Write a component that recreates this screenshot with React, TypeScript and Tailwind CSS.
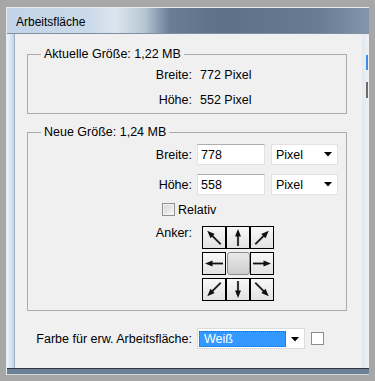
import React from "react";

function Arrow({ angle, length }: { angle: number; length: number }) {
  const tip = 10.5 - length / 2;
  const tail = 10.5 + length / 2;
  return (
    <svg width="22" height="21" viewBox="0 0 22 21">
      <g transform={`rotate(${angle} 11 10.5)`}>
        <line x1="11" y1={tail} x2="11" y2={tip + 5} stroke="#7a7a7a" strokeWidth="2.6" strokeOpacity="0.35" />
        <line x1="11" y1={tail} x2="11" y2={tip + 5} stroke="#111" strokeWidth="1.6" />
        <polygon points={`11,${tip} 8,${tip + 7.5} 14,${tip + 7.5}`} fill="#111" />
      </g>
    </svg>
  );
}

function Cell({ angle, length }: { angle: number; length: number }) {
  return (
    <div className="flex h-[23px] w-[24px] items-center justify-center border border-black bg-[linear-gradient(180deg,#f8f8f8,#e2e2e2)]">
      <Arrow angle={angle} length={length} />
    </div>
  );
}

function Caret() {
  return (
    <svg width="8" height="5" viewBox="0 0 8 5">
      <polygon points="0,0 8,0 4,4.5" fill="#000" />
    </svg>
  );
}

function PixelSelect() {
  return (
    <div className="ml-[6px] flex h-[21px] w-[67px] items-center justify-between border border-[#e2e2e2] bg-white pl-[4px] pr-[5px]">
      <span>Pixel</span>
      <Caret />
    </div>
  );
}

export default function App() {
  return (
    <div className="h-[381px] w-[375px] bg-[#a7a7a7] pb-[6px] pl-[6px] pr-[6px] pt-[7px] font-['Liberation_Sans',Arial,sans-serif] text-[12.5px] leading-[14px] text-black">
      <div className="flex h-full flex-col border-l border-t border-[#e6ebf0] bg-[#dbe5ef]">
        {/* Titelleiste */}
        <div className="flex h-[26px] items-center border-b border-[#7f8ea1] bg-[linear-gradient(90deg,#c3d4e8_0%,#c9d9ea_22%,#dbe5ef_30%,#b7c5d4_38%,#6a7d94_45%,#5d7088_60%,#687b92_86%,#8496ab_100%)] pl-[9px] pt-[2px] text-[12px]">
          Arbeitsfläche
        </div>

        <div className="flex flex-1">
          <div className="w-[8px] border-r border-[#a3b2c2] bg-[linear-gradient(90deg,#eef4fa,#c4d5e8)]" />

          <div className="flex-1 bg-[#f0f0f0]">
            <fieldset className="ml-[12px] mt-[13px] w-[320px] border border-[#ababab] pb-[1px] pt-[1px]">
              <legend className="ml-[13px] px-[3px]">Aktuelle Größe: 1,22 MB</legend>
              <div className="flex h-[25px] items-center">
                <span className="w-[164px] text-right">Breite:</span>
                <span className="ml-[8px]">772 Pixel</span>
              </div>
              <div className="flex h-[25px] items-center">
                <span className="w-[164px] text-right">Höhe:</span>
                <span className="ml-[8px]">552 Pixel</span>
              </div>
            </fieldset>

            <fieldset className="ml-[12px] mt-[11px] w-[320px] border border-[#ababab] pb-[9px] pt-[5px]">
              <legend className="ml-[13px] px-[3px]">Neue Größe: 1,24 MB</legend>
              <div className="flex h-[21px] items-center">
                <span className="w-[164px] text-right">Breite:</span>
                <div className="ml-[5px] flex h-[21px] w-[68px] items-center border border-[#dfe3e8] border-t-[#abadb3] bg-white pl-[3px]">
                  778
                </div>
                <PixelSelect />
              </div>
              <div className="mt-[9px] flex h-[21px] items-center">
                <span className="w-[164px] text-right">Höhe:</span>
                <div className="ml-[5px] flex h-[21px] w-[68px] items-center border border-[#dfe3e8] border-t-[#abadb3] bg-white pl-[3px]">
                  558
                </div>
                <PixelSelect />
              </div>
              <div className="mt-[8px] flex h-[13px] items-center pl-[134px]">
                <div className="h-[13px] w-[13px] border border-[#8e8f8f] bg-[linear-gradient(135deg,#d6d6d6,#f7f7f7)] shadow-[inset_0_0_0_1px_#f3f3f3]" />
                <span className="ml-[3px]">Relativ</span>
              </div>
              <div className="mt-[10px] flex">
                <span className="w-[164px] text-right">Anker:</span>
                <div className="ml-[10px] grid grid-cols-[24px_24px_24px] grid-rows-[23px_23px_23px] gap-y-[3px]">
                  <Cell angle={-45} length={19} />
                  <Cell angle={0} length={17} />
                  <Cell angle={45} length={19} />
                  <Cell angle={-90} length={18} />
                  <div className="flex h-[23px] w-[24px] items-center justify-center">
                    <div className="h-[23px] w-[23px] rounded-[3px] border border-[#8d8d8d] bg-[linear-gradient(180deg,#e9e9e9,#cdcdcd)]" />
                  </div>
                  <Cell angle={90} length={18} />
                  <Cell angle={-135} length={19} />
                  <Cell angle={180} length={17} />
                  <Cell angle={135} length={19} />
                </div>
              </div>
            </fieldset>

            <div className="mt-[17px] flex h-[21px] items-center">
              <span className="w-[177px] text-right">Farbe für erw. Arbeitsfläche:</span>
              <div className="ml-[5px] flex h-[21px] w-[108px] border border-[#dcdcdc] bg-white p-[1px] pt-[2px]">
                <div className="flex h-full w-[87px] items-center border border-dotted border-[#6b5a2a] bg-[#3399ff] pl-[4px] text-white">
                  Weiß
                </div>
                <div className="flex flex-1 items-center justify-center">
                  <Caret />
                </div>
              </div>
              <div className="ml-[6px] h-[13px] w-[13px] border border-[#8d8d8d] bg-white" />
            </div>
          </div>

          <div className="flex w-[7px] flex-col bg-[linear-gradient(90deg,#e4e9ee,#eef1f4)] pl-[4px]">
            <div className="mt-[21px] h-[15px] w-[2px] bg-[#3c8fe4]" />
            <div className="mt-[12px] h-[16px] w-[2px] bg-[#6b6b6b]" />
          </div>
        </div>

        <div className="h-[7px] border-b border-t border-b-[#cfd6de] border-t-[#2f3946] bg-[#6d8197]" />
      </div>
    </div>
  );
}
